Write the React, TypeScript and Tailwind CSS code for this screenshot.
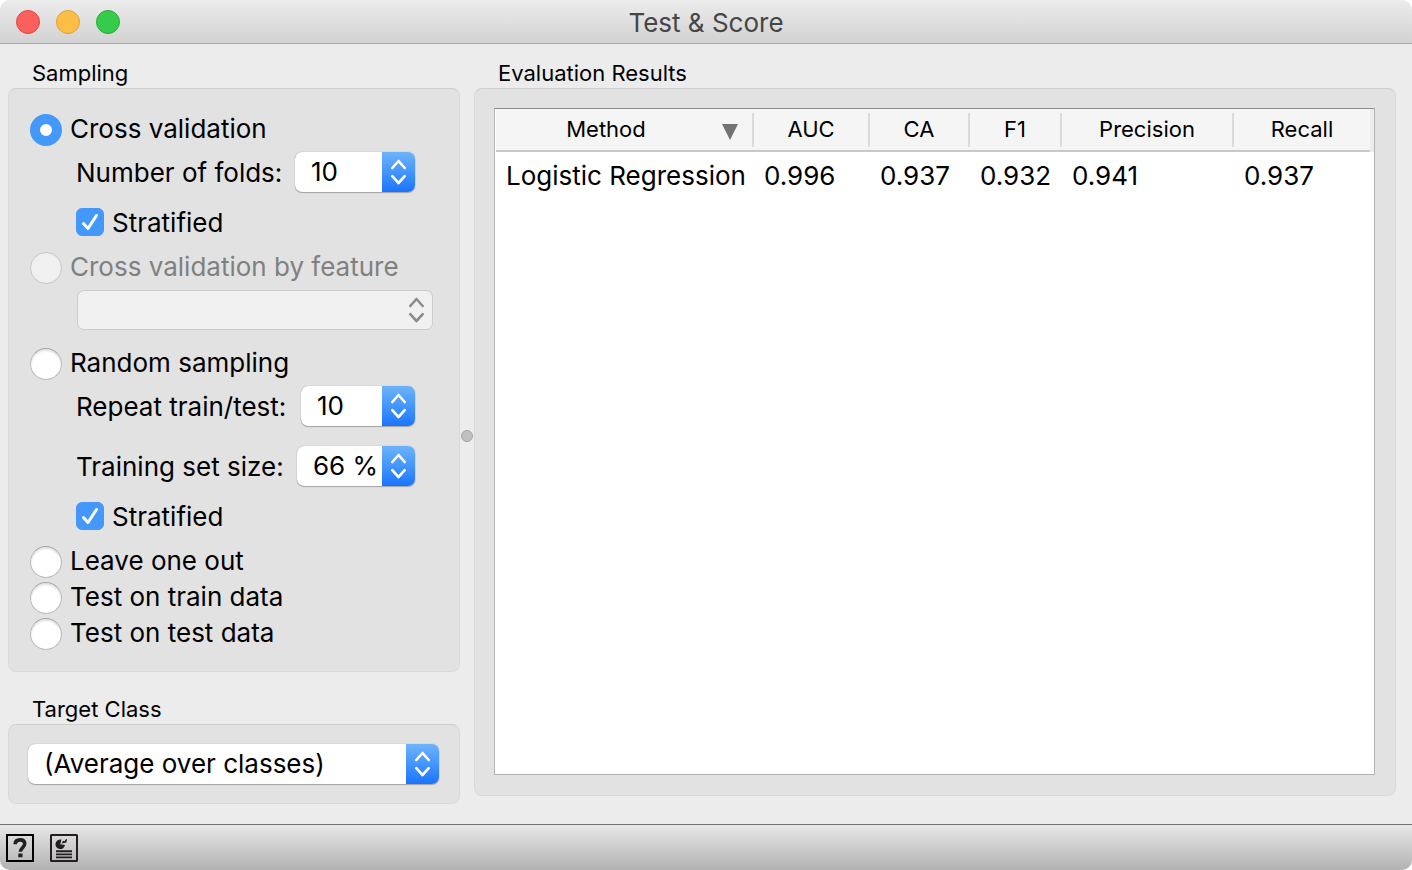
import { useState, type ReactNode } from "react";

const radioClass =
  "m-0 size-8 shrink-0 appearance-none rounded-full border border-[#bcbcbc] border-t-[#a2a2a2] bg-white shadow-[inset_0_2px_2px_rgba(0,0,0,0.12)] checked:border-[10px] checked:border-[#4498f9] checked:shadow-none disabled:border-[#c6c6c6] disabled:bg-[#f0f0f0] disabled:shadow-none";

function Chevrons({ className }: { className: string }) {
  return (
    <svg
      className={className}
      viewBox="0 0 33 40"
      fill="none"
      stroke="currentColor"
      strokeWidth="2.6"
      strokeLinecap="round"
      strokeLinejoin="round"
      aria-hidden="true"
    >
      <path d="M10.3 16 16.5 9l6.200 7M10.300 24.200l6.200 6.800 6.200-6.800" />
    </svg>
  );
}

function Group({ title, children, className }: { title: string; children: ReactNode; className: string }) {
  return (
    <section className={`flex flex-col ${className}`}>
      <h2 className="h-[30px] pl-6 text-[22px] leading-[30px]">{title}</h2>
      <div className="flex-1 rounded-lg border border-[#dadada] border-t-[#cecece] bg-[#e2e2e2]">{children}</div>
    </section>
  );
}

function Radio({ id, label, disabled, checked }: { id: string; label: string; disabled?: boolean; checked?: boolean }) {
  return (
    <div className="flex h-8 items-center gap-2">
      <input id={id} type="radio" name="sampling" disabled={disabled} defaultChecked={checked} className={radioClass} />
      <label htmlFor={id} className={disabled ? "pb-0.5 text-[#808080]" : "pb-0.5"}>
        {label}
      </label>
    </div>
  );
}

function Checkbox({ id, label }: { id: string; label: string }) {
  return (
    <div className="ml-[46px] flex h-7 items-center gap-2">
      <span className="grid size-7 shrink-0">
        <input
          id={id}
          type="checkbox"
          defaultChecked
          className="peer m-0 size-7 appearance-none rounded-[6px] border border-[#bcbcbc] bg-white [grid-area:1/1] checked:border-[#4498f9] checked:bg-[#4498f9]"
        />
        <svg
          viewBox="0 0 28 28"
          className="pointer-events-none invisible size-7 text-white [grid-area:1/1] peer-checked:visible"
          fill="none"
          stroke="currentColor"
          strokeWidth="3"
          strokeLinecap="round"
          strokeLinejoin="round"
          aria-hidden="true"
        >
          <path d="M7.500 15.500 12 20.500 20.500 7.500" />
        </svg>
      </span>
      <label htmlFor={id} className="pt-0.5">{label}</label>
    </div>
  );
}

function Spin({
  id,
  label,
  initial,
  suffix = "",
  step = 1,
  width,
}: {
  id: string;
  label: string;
  initial: number;
  suffix?: string;
  step?: number;
  width: string;
}) {
  const [value, setValue] = useState(initial);
  return (
    <div className="ml-[46px] flex h-10 w-[339px] items-center">
      <label htmlFor={id} className="flex-1 pt-0.5 whitespace-nowrap">
        {label}
      </label>
      <div
        className={`grid h-10 shrink-0 grid-cols-[1fr_33px] overflow-hidden rounded-[7px] bg-white shadow-[0_1px_1px_rgba(0,0,0,0.25),0_0_1px_rgba(0,0,0,0.4)] ${width}`}
      >
        <input
          id={id}
          type="text"
          inputMode="numeric"
          value={`${value}${suffix}`}
          onChange={(e) => setValue(parseInt(e.target.value, 10) || 0)}
          className="h-10 w-full min-w-0 bg-transparent pb-0.5 pl-4 outline-none [grid-area:1/1]"
        />
        <div className="grid bg-linear-to-b from-[#6cb3fa] to-[#1874fd] [grid-area:1/2]">
          <div className="grid grid-rows-2 [grid-area:1/1]">
            <button type="button" aria-label="Increase" onClick={() => setValue(value + step)} />
            <button type="button" aria-label="Decrease" onClick={() => setValue(value - step)} />
          </div>
          <Chevrons className="pointer-events-none h-10 w-[33px] text-white [grid-area:1/1]" />
        </div>
      </div>
    </div>
  );
}

const columns = ["AUC", "CA", "F1", "Precision", "Recall"];
const rows = [{ method: "Logistic Regression", scores: ["0.996", "0.937", "0.932", "0.941", "0.937"] }];

function Results() {
  return (
    <div className="h-full border border-[#b4b4b4] border-t-[#8e8e8e] bg-white pl-px">
      <table className="w-full table-fixed border-separate border-spacing-0">
        <colgroup>
          <col className="w-[258px]" />
          <col className="w-[116px]" />
          <col className="w-[100px]" />
          <col className="w-[92px]" />
          <col className="w-[172px]" />
          <col />
        </colgroup>
        <thead className="text-[22px]">
          <tr className="h-[43px] bg-[#f5f5f5]">
            <th scope="col" aria-sort="descending" className="border-b-2 border-[#c8c8c8] p-0 font-normal">
              <div className="flex h-[34px] items-center border-r-2 border-[#dadada]">
                <span className="flex-1 pr-1.5 pb-0.5">Method</span>
                <svg viewBox="0 0 16 16" className="mt-1 mr-3.5 size-4" aria-hidden="true">
                  <path d="M0 0h16L8 16z" fill="#737373" />
                </svg>
              </div>
            </th>
            {columns.map((name, i) =>
              i < columns.length - 1 ? (
                <th key={name} scope="col" className="border-b-2 border-[#c8c8c8] p-0 font-normal">
                  <div className="h-[34px] border-r-2 border-[#dadada] leading-8">{name}</div>
                </th>
              ) : (
                <th key={name} scope="col" className="border-r-4 border-[#ececec] p-0 font-normal">
                  <div className="h-[43px] border-b-2 border-[#c8c8c8] leading-[41px]">{name}</div>
                </th>
              ),
            )}
          </tr>
        </thead>
        <tbody>
          {rows.map((row) => (
            <tr key={row.method} className="h-12">
              <td className="p-0 pl-2.5 whitespace-nowrap">{row.method}</td>
              {row.scores.map((score, i) => (
                <td key={columns[i]} className="p-0 pl-2.5">
                  {score}
                </td>
              ))}
            </tr>
          ))}
        </tbody>
      </table>
    </div>
  );
}

export default function App() {
  return (
    <div className="min-h-screen bg-white font-['Inter',sans-serif] text-[26px] leading-8 text-black">
      <div className="flex min-h-screen flex-col overflow-hidden rounded-[10px] bg-[#ececec]">
        <header className="grid h-11 grid-cols-[1fr_auto_1fr] items-center border-b border-[#ababab] bg-linear-to-b from-[#ececec] to-[#d2d2d2]">
          <div className="flex gap-4 pl-4">
            <button type="button" aria-label="Close" className="size-6 rounded-full border border-[#e14640] bg-[#fc605c]" />
            <button type="button" aria-label="Minimize" className="size-6 rounded-full border border-[#dfa036] bg-[#fdbe45]" />
            <button type="button" aria-label="Zoom" className="size-6 rounded-full border border-[#27aa35] bg-[#35cb4b]" />
          </div>
          <h1 className="pt-0.5 text-[#464646]">Test &amp; Score</h1>
        </header>

        <main className="flex flex-1 pt-3.5 pr-4 pl-2">
          <div className="flex w-[452px] shrink-0 flex-col gap-[22px] pb-5">
            <Group title="Sampling" className="flex-1">
              <div className="flex flex-col pt-[25px] pr-[26px] pb-[21px] pl-[21px]">
                <div className="flex flex-col gap-1.5">
                  <Radio id="cv" label="Cross validation" checked />
                  <Spin id="folds" label="Number of folds:" initial={10} width="w-[120px]" />
                </div>
                <div className="py-4">
                  <Checkbox id="cv-stratified" label="Stratified" />
                </div>
                <div className="flex flex-col gap-1.5">
                  <Radio id="cv-feature" label="Cross validation by feature" disabled />
                  <div className="ml-[47px] grid">
                    <select
                      disabled
                      aria-label="Feature"
                      className="h-10 w-full appearance-none rounded-[7px] border border-[#cbcbcb] bg-[#f0f0f0] opacity-100 [grid-area:1/1]"
                    />
                    <Chevrons className="pointer-events-none h-10 w-[33px] justify-self-end text-[#8c8c8c] [grid-area:1/1]" />
                  </div>
                </div>
                <div className="flex flex-col gap-1.5 pt-[18px]">
                  <Radio id="random" label="Random sampling" />
                  <Spin id="repeat" label="Repeat train/test:" initial={10} width="w-[114px]" />
                </div>
                <div className="pt-5">
                  <Spin id="size" label="Training set size:" initial={66} suffix=" %" width="w-[118px]" />
                </div>
                <div className="py-4">
                  <Checkbox id="random-stratified" label="Stratified" />
                </div>
                <div className="flex flex-col gap-1">
                  <Radio id="loo" label="Leave one out" />
                  <Radio id="train" label="Test on train data" />
                  <Radio id="test" label="Test on test data" />
                </div>
              </div>
            </Group>
            <Group title="Target Class" className="shrink-0">
              <div className="py-[19px] pr-5 pl-[19px]">
                <div className="grid grid-cols-[1fr_33px] overflow-hidden rounded-[7px] bg-white shadow-[0_1px_1px_rgba(0,0,0,0.25),0_0_1px_rgba(0,0,0,0.4)]">
                  <div className="bg-linear-to-b from-[#6cb3fa] to-[#1874fd] [grid-area:1/2]" />
                  <select
                    aria-label="Target Class"
                    className="h-10 w-full appearance-none bg-transparent pl-4 outline-none [grid-area:1/1/2/3]"
                  >
                    <option>(Average over classes)</option>
                  </select>
                  <Chevrons className="pointer-events-none h-10 w-[33px] text-white [grid-area:1/2]" />
                </div>
              </div>
            </Group>
          </div>

          <div
            className="flex w-3.5 shrink-0 items-center justify-center pb-2.5"
            role="separator"
            aria-orientation="vertical"
          >
            <span className="size-3 shrink-0 rounded-full border border-[#a4a4a4] bg-[#c0c0c0]" />
          </div>

          <Group title="Evaluation Results" className="min-w-0 flex-1 pb-7">
            <div className="h-full pt-[19px] pr-5 pb-5 pl-[19px]">
              <Results />
            </div>
          </Group>
        </main>

        <footer className="flex h-[46px] items-center gap-4 border-t border-[#707070] bg-linear-to-b from-[#e8e8e8] to-[#b2b2b2] pl-1.5">
          <button type="button" aria-label="Help" className="size-7">
            <svg viewBox="0 0 28 28" className="size-7" fill="none">
              <rect x="1" y="1" width="26" height="26" stroke="#000" strokeWidth="2" />
              <path
                d="M9.200 10.300C9.200 7.300 11.200 5.900 14 5.900c2.900 0 4.700 1.500 4.700 3.900 0 3.700-4.300 4.100-4.300 8"
                stroke="#231f20"
                strokeWidth="3.600"
              />
              <path d="M12.300 19.500h4.200v3.800h-4.200z" fill="#231f20" />
            </svg>
          </button>
          <button type="button" aria-label="Report" className="size-7">
            <svg viewBox="0 0 28 28" className="size-7" fill="none">
              <rect x="1" y="1" width="26" height="26" rx="0.500" stroke="#231f20" strokeWidth="2" />
              <path d="M10.300 10.200 11.400 5.600A4.800 4.800 0 1 0 15 11z" fill="#231f20" />
              <path d="M11.500 9.600 13 6.800l1.500.4L16 5l1 .4-.6 3.200z" fill="#231f20" />
              <path d="M6 17.200h16M6 20.400h16M6 23.400h16" stroke="#231f20" strokeWidth="1.900" />
            </svg>
          </button>
        </footer>
      </div>
    </div>
  );
}
